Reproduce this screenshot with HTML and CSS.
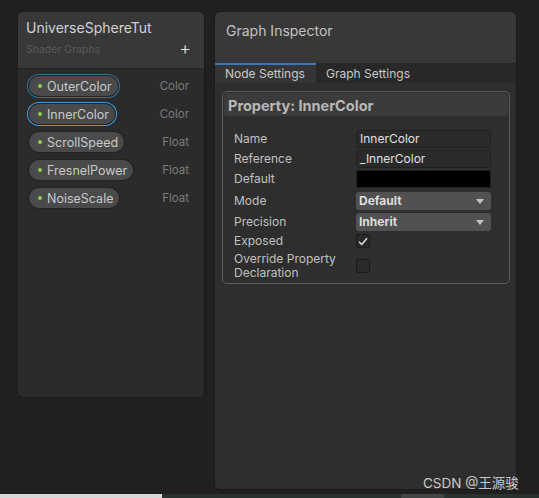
FILE: index.html
```html
<!DOCTYPE html>
<html>
<head>
<meta charset="utf-8">
<link rel="stylesheet" href="styles.css">
</head>
<body>
<div class="main">
  <div class="blackboard">
    <div class="bb-head">
      <div class="bb-title">UniverseSphereTut</div>
      <div class="bb-sub"><span>Shader Graphs</span><span class="plus">+</span></div>
    </div>
    <div class="bb-list">
      <div class="row"><span class="pill sel-dim"><i class="dot"></i>OuterColor</span><span class="type">Color</span></div>
      <div class="row"><span class="pill sel"><i class="dot"></i>InnerColor</span><span class="type">Color</span></div>
      <div class="row"><span class="pill"><i class="dot"></i>ScrollSpeed</span><span class="type">Float</span></div>
      <div class="row"><span class="pill"><i class="dot"></i>FresnelPower</span><span class="type">Float</span></div>
      <div class="row"><span class="pill"><i class="dot"></i>NoiseScale</span><span class="type">Float</span></div>
    </div>
  </div>
  <div class="inspector">
    <div class="in-head">Graph Inspector</div>
    <div class="tabs">
      <div class="tab active">Node Settings</div>
      <div class="tab">Graph Settings</div>
    </div>
    <div class="in-body">
      <div class="prop">
        <div class="prop-title">Property: InnerColor</div>
        <div class="fields">
          <div class="f"><span class="lbl">Name</span><span class="txt">InnerColor</span></div>
          <div class="f"><span class="lbl">Reference</span><span class="txt">_InnerColor</span></div>
          <div class="f"><span class="lbl">Default</span><span class="color"></span></div>
          <div class="f dd"><span class="lbl">Mode</span><span class="drop">Default<i class="arr"></i></span></div>
          <div class="f dd"><span class="lbl">Precision</span><span class="drop">Inherit<i class="arr"></i></span></div>
          <div class="f small"><span class="lbl">Exposed</span><span class="chk"><svg width="10" height="9" viewBox="0 0 10 9"><path d="M1 4.8 L3.8 7.5 L9 1.2" fill="none" stroke="#e6e6e6" stroke-width="1.4"/></svg></span></div>
          <div class="f two"><span class="lbl">Override Property<br>Declaration</span><span class="chk"></span></div>
        </div>
      </div>
    </div>
  </div>
</div>
<div class="watermark">CSDN @王源骏</div>
<div class="bottom"><span class="b1"></span><span class="b2"></span><span class="b3"></span><span class="b4"></span></div>
</body>
</html>
```
FILE: styles.css
```css
html, body { margin: 0; padding: 0; }
body {
  width: 539px; height: 498px; overflow: hidden; position: relative;
  background: #202020;
  font-family: Inter, "Noto Sans", "Noto Sans CJK SC", sans-serif;
  color: #c4c4c4;
  display: flex; flex-direction: column;
}
.main { display: flex; align-items: flex-start; padding: 12px 0 0 18px; height: 482px; box-sizing: border-box; }
.blackboard {
  width: 186px; height: 385px; background: #2b2b2b; border-radius: 5px;
  box-shadow: 0 0 0 1px #1b1b1b; overflow: hidden; display: flex; flex-direction: column;
}
.bb-head { background: #383838; height: 57px; box-sizing: border-box; padding: 7px 8px 0 8px; border-bottom: 1px solid #232323; }
.bb-title { font-size: 14px; color: #d2d2d2; line-height: 17px; }
.bb-sub { display: flex; justify-content: space-between; align-items: center; margin-top: 6px; font-size: 10.5px; color: #5a5a5a; }
.plus { color: #e8e8e8; font-size: 18px; line-height: 14px; margin-right: 5px; font-weight: 300; }
.bb-list { padding: 5px 0 0 11px; display: flex; flex-direction: column; gap: 4px; }
.row { display: flex; justify-content: space-between; align-items: center; height: 24px; padding-right: 15px; }
.pill {
  display: inline-flex; align-items: center; height: 20px; box-sizing: border-box;
  background: #4a4a4a; border-radius: 11px; padding: 0 6px 0 9px; font-size: 12.5px; color: #c9c9c9;
  box-shadow: 0 0 0 1px #232323;
}
.pill.sel-dim { box-shadow: 0 0 0 1px #232323, 0 0 0 2px #2f75a6; }
.pill.sel { box-shadow: 0 0 0 1px #232323, 0 0 0 2px #3d9ee0; }
.dot { width: 4px; height: 4px; border-radius: 50%; background: #86d34a; margin-right: 5px; }
.type { font-size: 11.5px; color: #7c7c7c; }
.inspector {
  margin-left: 11px; width: 301px; height: 477px; background: #2b2b2b; border-radius: 5px;
  box-shadow: 0 0 0 1px #1b1b1b; overflow: hidden; display: flex; flex-direction: column;
}
.in-head { background: #383838; height: 51px; padding: 10px 11px 0; box-sizing: border-box; font-size: 14px; color: #c2c2c2; }
.tabs { display: flex; background: #282828; height: 20px; }
.tab { font-size: 12px; color: #c9c9c9; padding: 2px 10px 0; box-sizing: border-box; line-height: 17px; }
.tab.active { background: #353535; border-top: 2px solid #3a78bd; width: 101px; padding: 0 10px; }
.in-body { flex: 1; background: #2e2e2e; padding: 8px 6px 0 7px; display: flex; flex-direction: column; }
.prop { border: 1px solid #5c5c5c; border-radius: 5px; height: 193px; box-sizing: border-box; padding: 1px; }
.prop-title { background: #3b3b3b; border-radius: 4px; height: 23px; font-size: 14.5px; font-weight: 700; color: #b8b8b8; padding: 4px 4px 0; box-sizing: border-box; }
.fields { padding: 14px 17px 0 10px; display: flex; flex-direction: column; gap: 2px; }
.f { display: flex; align-items: center; min-height: 18px; }
.f.dd { margin-top: 2px; }
.f.dd + .f.dd { margin-top: 1px; }
.f.small { min-height: 14px; margin-top: 1px; }
.f.two { margin-top: 2px; }
.lbl { width: 122px; font-size: 12px; color: #c0c0c0; line-height: 14px; }
.txt { flex: 1; height: 18px; box-sizing: border-box; background: #2a2a2a; border: 1px solid #212121; border-radius: 3px; font-size: 12px; color: #e0e0e0; padding: 0 3px; line-height: 16px; }
.color { flex: 1; height: 18px; background: #000; border: 1px solid #212121; box-sizing: border-box; }
.drop { flex: 1; height: 18px; box-sizing: border-box; background: #515151; border-radius: 3px; font-size: 12px; font-weight: 700; color: #dedede; padding: 0 3px; line-height: 18px; display: flex; justify-content: space-between; align-items: center; }
.arr { width: 0; height: 0; border-left: 4px solid transparent; border-right: 4px solid transparent; border-top: 5px solid #c4c4c4; margin-right: 4px; }
.chk { width: 14px; height: 14px; background: #2a2a2a; border: 1px solid #1c1c1c; border-radius: 2px; box-sizing: border-box; display: flex; align-items: center; justify-content: center; }
.watermark { position: absolute; left: 423px; top: 472px; font-size: 13.5px; color: #c8c8c8; white-space: nowrap; }
.bottom { display: flex; height: 4px; margin-top: 12px; }
.bottom span { display: block; height: 4px; }
.b1 { width: 162px; background: #d8d8d8; }
.b2 { width: 239px; background: #2a3230; }
.b3 { width: 43px; background: #3f4644; }
.b4 { flex: 1; background: #2a3230; }
```
